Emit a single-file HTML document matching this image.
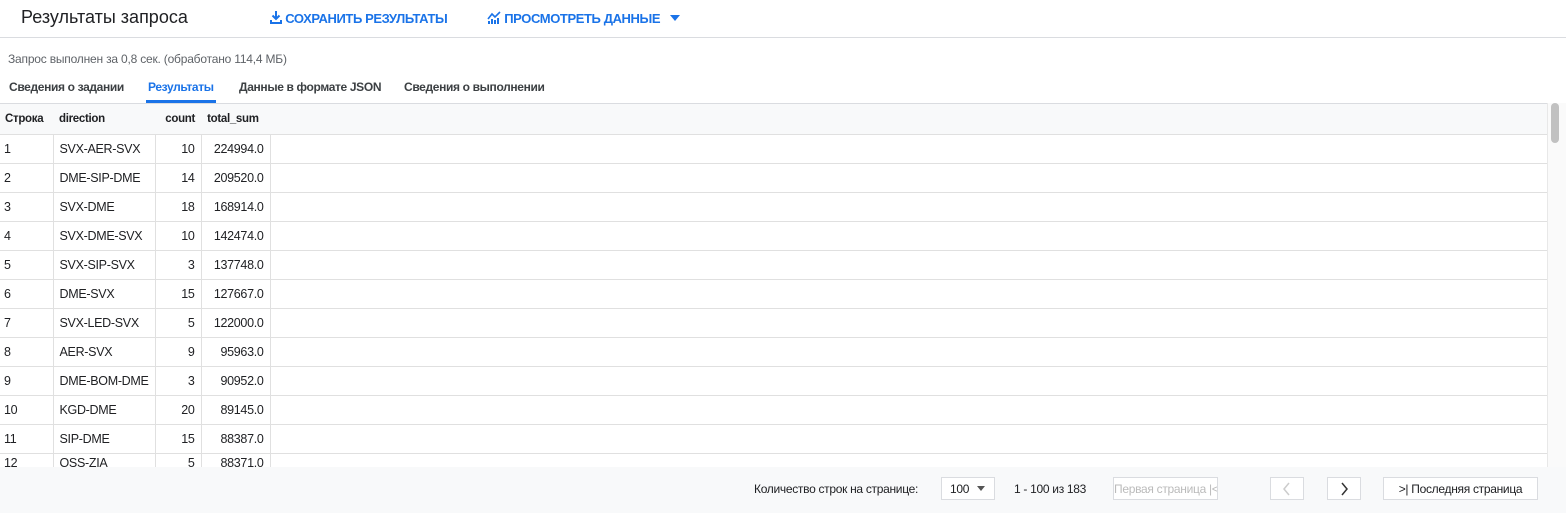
<!DOCTYPE html><html><head><style>
body{margin:0;width:1566px;height:513px;overflow:hidden;font-family:"Liberation Sans",sans-serif;background:#fff;color:#202124;position:relative}
.a{position:absolute;white-space:nowrap}
.blue{color:#1a73e8}
table{border-collapse:collapse;font-size:12.5px;position:absolute;left:0;top:103px;letter-spacing:-0.3px}
td,th{height:28px;padding:0 6px;border-bottom:1px solid #e0e0e0;border-right:1px solid #e0e0e0;text-align:left;font-weight:normal;white-space:nowrap}
th{font-weight:bold;font-size:11.5px;background:#f8f9fa;height:30px;border-right:none;border-top:1px solid #dadce0}
td:first-child{padding-left:4px}
.r{text-align:right}
.btn{position:absolute;top:477px;height:23px;border:1px solid #dadce0;background:#fff;font-size:12px;line-height:22px;box-sizing:border-box;text-align:center;white-space:nowrap;overflow:hidden;letter-spacing:-0.3px}
.tab{font-size:12px;font-weight:bold;letter-spacing:-0.35px;color:#3c4043;top:80px}
</style></head><body>
<div class="a" style="left:21px;top:7px;font-size:18px">Результаты запроса</div>
<div class="a blue" style="left:270px;top:11px;font-size:13px;font-weight:bold;letter-spacing:-0.4px"><svg width="12" height="13" viewBox="0 0 12 13" style="vertical-align:-1px"><path d="M6 0v8M2.5 4.5L6 8l3.5-3.5" stroke="#1a73e8" stroke-width="2" fill="none"/><path d="M0 9v4h12V9h-2v2H2V9z" fill="#1a73e8"/></svg> СОХРАНИТЬ РЕЗУЛЬТАТЫ</div>
<div class="a blue" style="left:487px;top:11px;font-size:13px;font-weight:bold;letter-spacing:-0.4px"><svg width="14" height="13" viewBox="0 0 14 13" style="vertical-align:-1px"><path d="M1 8l4-5 3 3 5-5" stroke="#1a73e8" stroke-width="1.6" fill="none"/><path d="M1 10h2v3H1zM4 8h2v5H4zM7 9h2v4H7zM10 7h2v6h-2z" fill="#1a73e8"/></svg> ПРОСМОТРЕТЬ ДАННЫЕ</div>
<svg class="a" style="left:670px;top:15px" width="10" height="6"><path d="M0 0h10L5 6z" fill="#1a73e8"/></svg>
<div class="a" style="left:0;top:37px;width:1566px;height:1px;background:#dadce0"></div>
<div class="a" style="left:8px;top:52px;font-size:12px;color:#5f6368;letter-spacing:-0.2px">Запрос выполнен за 0,8 сек. (обработано 114,4 МБ)</div>
<div class="a tab" style="left:9px">Сведения о задании</div>
<div class="a tab blue" style="left:148px;color:#1a73e8">Результаты</div>
<div class="a" style="left:146px;top:100px;width:70px;height:3px;background:#1a73e8"></div>
<div class="a tab" style="left:239px">Данные в формате JSON</div>
<div class="a tab" style="left:404px">Сведения о выполнении</div>
<table style="width:1547px">
<tr><th style="width:42px;padding-left:5px">Строка</th><th style="width:90px">direction</th><th class="r" style="width:34px">count</th><th style="width:57px">total_sum</th><th></th></tr>
<tr><td>1</td><td>SVX-AER-SVX</td><td class="r">10</td><td class="r">224994.0</td><td style="border-right:none"></td></tr>
<tr><td>2</td><td>DME-SIP-DME</td><td class="r">14</td><td class="r">209520.0</td><td style="border-right:none"></td></tr>
<tr><td>3</td><td>SVX-DME</td><td class="r">18</td><td class="r">168914.0</td><td style="border-right:none"></td></tr>
<tr><td>4</td><td>SVX-DME-SVX</td><td class="r">10</td><td class="r">142474.0</td><td style="border-right:none"></td></tr>
<tr><td>5</td><td>SVX-SIP-SVX</td><td class="r">3</td><td class="r">137748.0</td><td style="border-right:none"></td></tr>
<tr><td>6</td><td>DME-SVX</td><td class="r">15</td><td class="r">127667.0</td><td style="border-right:none"></td></tr>
<tr><td>7</td><td>SVX-LED-SVX</td><td class="r">5</td><td class="r">122000.0</td><td style="border-right:none"></td></tr>
<tr><td>8</td><td>AER-SVX</td><td class="r">9</td><td class="r">95963.0</td><td style="border-right:none"></td></tr>
<tr><td>9</td><td>DME-BOM-DME</td><td class="r">3</td><td class="r">90952.0</td><td style="border-right:none"></td></tr>
<tr><td>10</td><td>KGD-DME</td><td class="r">20</td><td class="r">89145.0</td><td style="border-right:none"></td></tr>
<tr><td>11</td><td>SIP-DME</td><td class="r">15</td><td class="r">88387.0</td><td style="border-right:none"></td></tr>
<tr><td style="vertical-align:top;padding-top:2px">12</td><td style="vertical-align:top;padding-top:2px">OSS-ZIA</td><td class="r" style="vertical-align:top;padding-top:2px">5</td><td class="r" style="vertical-align:top;padding-top:2px">88371.0</td><td style="border-right:none"></td></tr>
</table>
<div class="a" style="left:1547px;top:103px;width:19px;height:364px;background:#fafafa;border-left:1px solid #e8e8e8"></div>
<div class="a" style="left:1551px;top:103px;width:8px;height:40px;background:#c1c1c1;border-radius:4px"></div>
<div class="a" style="left:0;top:467px;width:1566px;height:46px;background:#f8f9fa"></div>
<div class="a" style="left:754px;top:482px;font-size:12px;letter-spacing:-0.3px">Количество строк на странице:</div>
<div class="btn" style="left:941px;width:54px;text-align:left;padding-left:8px">100</div>
<svg class="a" style="left:977px;top:486px" width="8" height="5"><path d="M0 0h8L4 5z" fill="#555"/></svg>
<div class="a" style="left:1014px;top:482px;font-size:12px;letter-spacing:-0.3px">1 - 100 из 183</div>
<div class="btn" style="left:1113px;width:105px;color:#bbb">Первая страница |&lt;</div>
<div class="btn" style="left:1270px;width:34px"><svg width="10" height="14" style="margin-top:4px"><path d="M7 1L2 7l5 6" stroke="#ccc" stroke-width="1.5" fill="none"/></svg></div>
<div class="btn" style="left:1327px;width:34px"><svg width="10" height="14" style="margin-top:4px"><path d="M3 1l5 6-5 6" stroke="#333" stroke-width="1.5" fill="none"/></svg></div>
<div class="btn" style="left:1383px;width:155px">&gt;| Последняя страница</div>
</body></html>
